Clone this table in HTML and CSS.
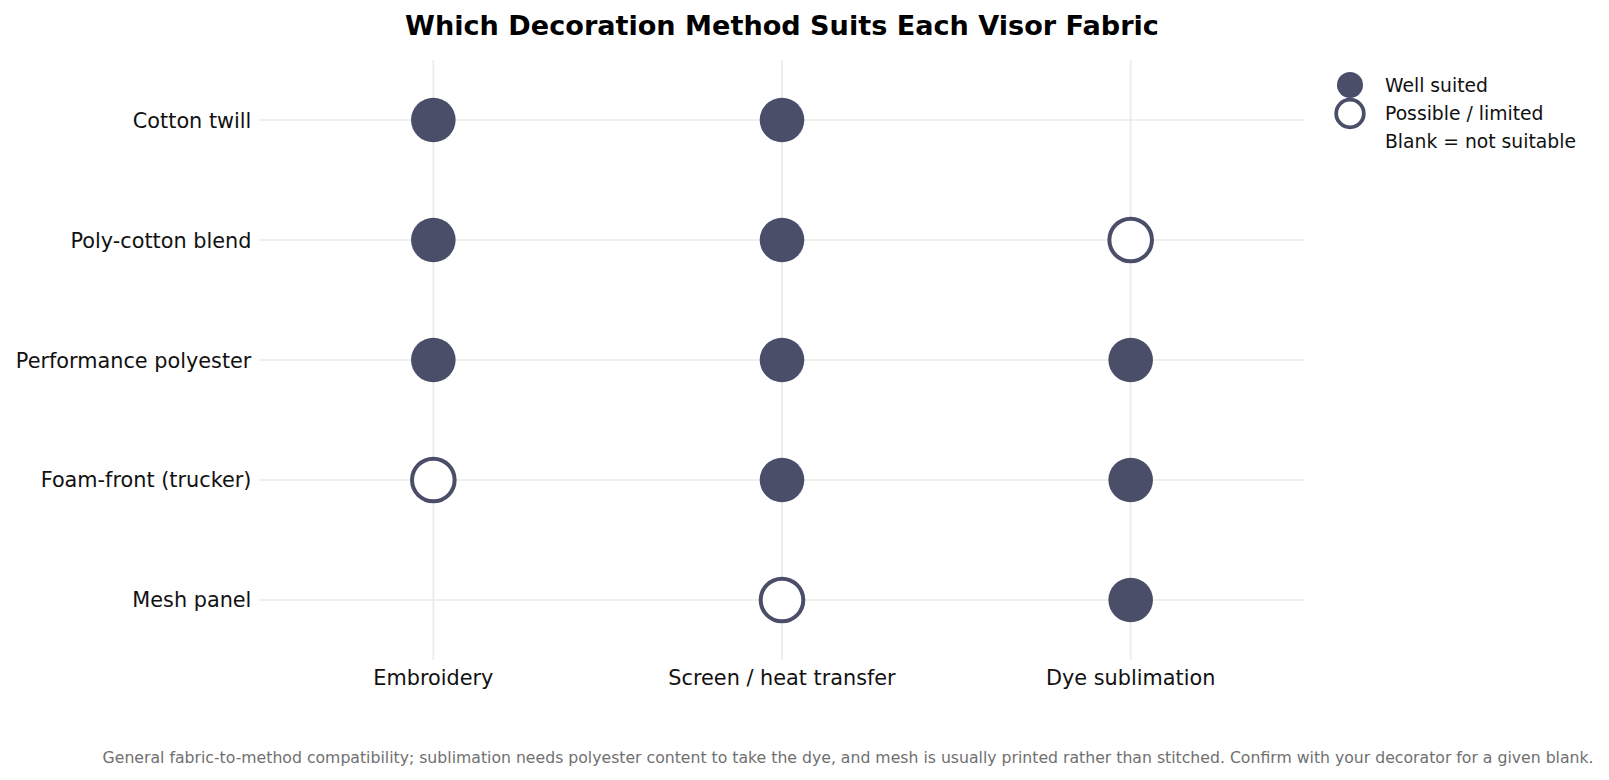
FILE: index.html
```html
<!DOCTYPE html>
<html lang="en">
<head>
<meta charset="utf-8">
<title>Which Decoration Method Suits Each Visor Fabric</title>
<link rel="stylesheet" href="styles.css">
</head>
<body>
<div class="figure">
  <div class="chart">
    <h1 class="title">Which Decoration Method Suits Each Visor Fabric</h1>
    <div class="ylabels">
      <div class="ylabel">Cotton twill</div>
      <div class="ylabel">Poly-cotton blend</div>
      <div class="ylabel">Performance polyester</div>
      <div class="ylabel">Foam-front (trucker)</div>
      <div class="ylabel">Mesh panel</div>
    </div>
    <div class="plot">
      <svg class="plot-svg" width="1046" height="600" viewBox="0 0 1046 600">
        <g class="grid">
          <line x1="174.33" y1="0" x2="174.33" y2="600"/>
          <line x1="523" y1="0" x2="523" y2="600"/>
          <line x1="871.67" y1="0" x2="871.67" y2="600"/>
          <line x1="0" y1="60" x2="1046" y2="60"/>
          <line x1="0" y1="180" x2="1046" y2="180"/>
          <line x1="0" y1="300" x2="1046" y2="300"/>
          <line x1="0" y1="420" x2="1046" y2="420"/>
          <line x1="0" y1="540" x2="1046" y2="540"/>
        </g>
        <g class="markers">
          <circle class="full" cx="174.33" cy="60" r="22.3"/>
          <circle class="full" cx="523" cy="60" r="22.3"/>

          <circle class="full" cx="174.33" cy="180" r="22.3"/>
          <circle class="full" cx="523" cy="180" r="22.3"/>
          <circle class="part" cx="871.67" cy="180" r="21.3"/>

          <circle class="full" cx="174.33" cy="300" r="22.3"/>
          <circle class="full" cx="523" cy="300" r="22.3"/>
          <circle class="full" cx="871.67" cy="300" r="22.3"/>

          <circle class="part" cx="174.33" cy="420" r="21.3"/>
          <circle class="full" cx="523" cy="420" r="22.3"/>
          <circle class="full" cx="871.67" cy="420" r="22.3"/>

          <circle class="part" cx="523" cy="540" r="21.3"/>
          <circle class="full" cx="871.67" cy="540" r="22.3"/>
        </g>
      </svg>
    </div>
    <div class="legend">
      <div class="legend-item">
        <svg class="legend-mark" width="32" height="28" viewBox="0 0 32 28"><circle class="full" cx="16" cy="14" r="13"/></svg>
        <span>Well suited</span>
      </div>
      <div class="legend-item">
        <svg class="legend-mark" width="32" height="28" viewBox="0 0 32 28"><circle class="part legend-ring" cx="16" cy="14.5" r="13.8"/></svg>
        <span>Possible / limited</span>
      </div>
      <div class="legend-item">
        <span class="legend-blank"></span>
        <span>Blank = not suitable</span>
      </div>
    </div>
    <div class="xlabels">
      <div class="xlabel">Embroidery</div>
      <div class="xlabel">Screen / heat transfer</div>
      <div class="xlabel">Dye sublimation</div>
    </div>
  </div>
  <p class="note">General fabric-to-method compatibility; sublimation needs polyester content to take the dye, and mesh is usually printed rather than stitched. Confirm with your decorator for a given blank.</p>
</div>
</body>
</html>
```

FILE: styles.css
```css
html, body {
  margin: 0;
  padding: 0;
  background: #ffffff;
}

body {
  font-family: "DejaVu Sans", "Liberation Sans", sans-serif;
  color: #111111;
  width: 1609px;
  height: 780px;
  overflow: hidden;
}

.figure {
  display: flex;
  flex-direction: column;
}

.chart {
  display: grid;
  grid-template-columns: 259px 1046px 1fr;
  grid-template-rows: auto 600px auto;
}

.title {
  grid-column: 2;
  grid-row: 1;
  margin: 0 0 17px 0;
  padding-top: 9px;
  font-size: 27.1px;
  line-height: 34px;
  font-weight: bold;
  color: #000000;
  text-align: center;
  white-space: nowrap;
}

.ylabels {
  grid-column: 1;
  grid-row: 2;
  display: flex;
  flex-direction: column;
  padding-right: 7.6px;
  padding-top: 1.5px;
}

.ylabel {
  height: 120px;
  display: flex;
  align-items: center;
  justify-content: flex-end;
  font-size: 20.8px;
  white-space: nowrap;
}

.plot {
  grid-column: 2;
  grid-row: 2;
}

.plot-svg {
  display: block;
}

.grid line {
  stroke: #ebebeb;
  stroke-width: 1.7;
}

.full {
  fill: #4a4e69;
}

.part {
  fill: #ffffff;
  stroke: #4a4e69;
  stroke-width: 4;
}

.legend-ring {
  stroke-width: 3.8;
}

.legend {
  grid-column: 3;
  grid-row: 2;
  align-self: start;
  display: flex;
  flex-direction: column;
  padding: 11px 0 0 29px;
}

.legend-item {
  display: flex;
  align-items: center;
  height: 28.3px;
  gap: 19px;
  font-size: 18.75px;
  white-space: nowrap;
}

.legend-mark {
  display: block;
  flex: none;
  overflow: visible;
}

.legend-blank {
  width: 32px;
  flex: none;
}

.xlabels {
  grid-column: 2;
  grid-row: 3;
  display: grid;
  grid-template-columns: repeat(3, 1fr);
  margin-top: 5px;
}

.xlabel {
  text-align: center;
  font-size: 20.8px;
  line-height: 26px;
  white-space: nowrap;
}

.note {
  margin: 57px 0 0 0;
  padding-right: 15.4px;
  text-align: right;
  font-size: 15.7px;
  line-height: 20px;
  color: #707070;
  white-space: nowrap;
}
```
